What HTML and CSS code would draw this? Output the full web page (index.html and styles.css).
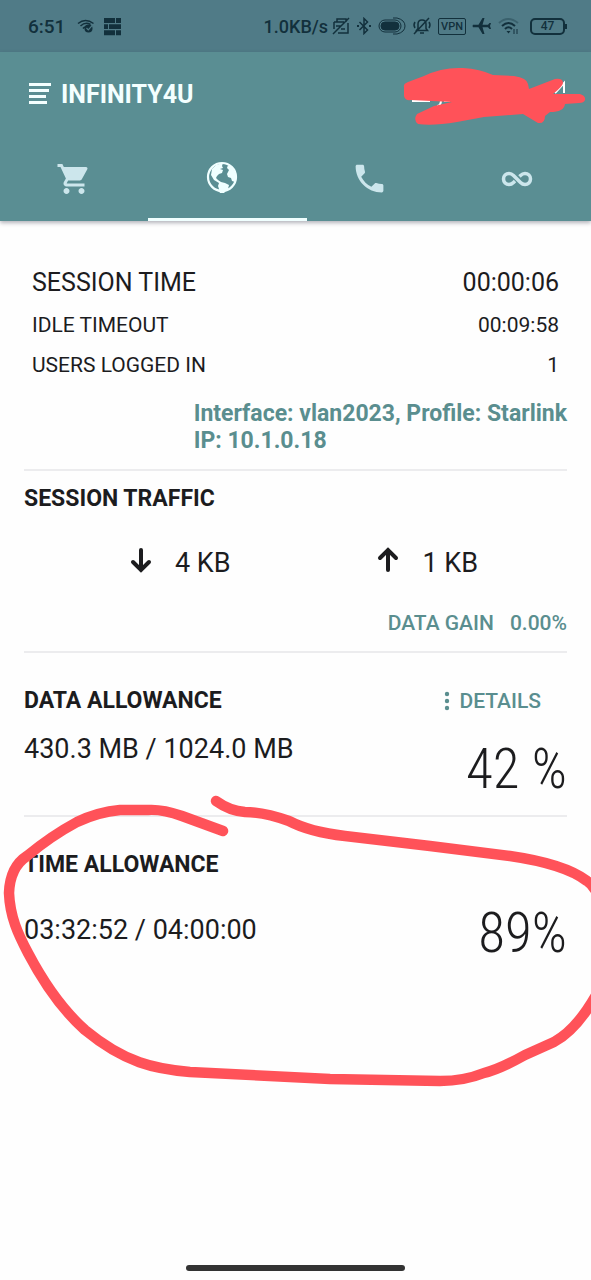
FILE: index.html
```html
<!DOCTYPE html>
<html lang="en">
<head>
<meta charset="utf-8">
<meta name="viewport" content="width=device-width, initial-scale=1">
<title>INFINITY4U</title>
<link rel="stylesheet" href="styles.css">
</head>
<body>
<div class="screen">
  <div class="status">
    <span class="clock">6:51</span>
    <svg class="wifi-check" width="18" height="14" viewBox="0 0 18 14" fill="none" stroke="currentColor" stroke-width="1.500">
      <path d="M1 4.500Q8.500-1.500 16.500 4.500M3.500 7Q8.500 2.500 13.500 5.500M6 9.500Q7 8 9 7.800"/>
      <circle cx="11.500" cy="9.500" r="4" fill="currentColor" stroke="none"/>
      <path d="M9.500 9l1.800 1.800 4-4.500" stroke="#507b87" stroke-width="1.200"/>
    </svg>
    <svg width="19" height="19" viewBox="0 0 19 19" fill="currentColor">
      <path d="M1 1h11v5H1zM13 1h5v5h-5zM1 7.200h4v4.800H1zM6 7.200h12v4.800H6zM1 13.200h11v5H1zM13 13.200h5v5h-5z"/>
    </svg>
    <span class="rate">1.0KB/s</span>
    <svg width="18" height="18" viewBox="0 0 18 18" fill="none" stroke="currentColor" stroke-width="1.500">
      <path d="M5 5V2h9v3M2 5h10M2 5v7M6 16h10V6M1 17L17 1M4 9h5M9 12h4"/>
    </svg>
    <svg width="16" height="18" viewBox="0 0 16 18" fill="none" stroke="currentColor" stroke-width="1.500">
      <path d="M3.500 5l8 8L8 16.500v-15L11.500 5l-8 8"/>
      <path d="M1 9h2M13 9h2" stroke-width="2"/>
    </svg>
    <svg width="28" height="18" viewBox="0 0 28 18" fill="none" stroke="currentColor">
      <rect x="3" y="5" width="18" height="8" rx="4" fill="currentColor"/>
      <rect x="1" y="3" width="22" height="12" rx="6"/>
      <path d="M15 1h4q8 2 8 8t-8 8h-4"/>
    </svg>
    <svg width="20" height="18" viewBox="0 0 20 18" fill="none" stroke="currentColor" stroke-width="1.500">
      <path d="M4.500 13.500h11l-1.500-2V7q0-4-4-4T6 7v4.500zM8 16h4M2 17L17 1M3 5q-2 3 0 6M17 5q2 3 0 6"/>
    </svg>
    <span class="vpn">VPN</span>
    <svg width="20" height="18" viewBox="0 0 20 18" fill="currentColor">
      <path d="M1 7.800h5.500L10.500 1h2l-2 6.800H16L17.500 6H19l-1 3 1 3h-1.500L16 10.200h-5.500l2 6.800h-2l-4-6.800H1q-1-1.200 0-2.400z"/>
    </svg>
    <svg width="22" height="18" viewBox="0 0 22 18" fill="none" stroke="currentColor" stroke-width="2">
      <path d="M1 6q9-8 19 0" opacity=".35"/>
      <path d="M4 9q6.500-6 13 0M7 12q3.500-3.500 7 0"/>
      <path d="M8.500 14h4l-2 2.500z" fill="currentColor" stroke="none"/>
      <path d="M16 12v5M19 12v5" stroke-width="1"/>
    </svg>
    <span class="battery">47</span>
  </div>

  <header class="bar">
    <div class="title-row">
      <button class="menu" aria-label="Menu">
        <svg width="24" height="24" viewBox="0 0 24 24" fill="#f4ffff"><path d="M1 1h22v3H1zM1 7h20v3H1zM1 13h17v3H1zM1 19h18v3H1z"/></svg>
      </button>
      <h1 class="brand">INFINITY4U</h1>
      <div class="account">
        <svg width="190" height="64" viewBox="0 0 190 64">
          <path d="M22 41h18" stroke="#fff" stroke-width="2"/>
          <path d="M51 40q0 6-4 6M54 41h6M66 40h6M149 35l6-3M165 33l9-10v10" fill="none" stroke="#fff" stroke-width="2"/>
          <path d="M14 27Q13 24 18 22L34 16Q52 7 73 8Q90 9 103 15L124 16Q137 18 138 24L139 29L165 19Q173 18 173 23Q173 26 163 34L190 34Q196 36 195 40Q194 43 189 43L175 44Q174 52 160 52L155 56Q155 64 148 63L133 54L94 57L67 62Q43 66 28 64Q23 60 27 54L44 46L62 42L21 40Q15 41 14 36Z" fill="#ff5259"/>
        </svg>
      </div>
    </div>
    <nav class="tabs">
      <button class="tab" aria-label="Shop"><svg width="36" height="36" viewBox="0 0 24 24" fill="#cce6ec"><path d="M7 18c-1.100 0-1.990.9-1.990 2S5.900 22 7 22s2-.9 2-2-.9-2-2-2zM1 2v2h2l3.600 7.590-1.350 2.450c-.16.280-.25.610-.25.960 0 1.100.9 2 2 2h12v-2H7.420c-.14 0-.25-.11-.25-.25l.03-.12.900-1.630h7.450c.75 0 1.410-.41 1.750-1.030l3.580-6.490A1 1 0 0020 4H5.210l-.94-2H1zm16 16c-1.100 0-1.990.9-1.990 2s.89 2 1.990 2 2-.9 2-2-.9-2-2-2z"/></svg></button>
      <button class="tab active" aria-label="Internet"><svg width="32" height="32" viewBox="0 0 32 32"><circle cx="16" cy="16" r="14" fill="none" stroke="#f0ffff" stroke-width="2.200"/><path d="M6 8l4-4 7-2-1 3 1 2-3 1 3 1-1 3-3 1-2 2-1 2 2 2 3 2 4 1 4 2-1 4-3 2-1 3h-4l-1-5-1-3 1-3-5-3-3-5zM20 3l6 3 4 8-1 7-3-1-1-3-3-1-1-3 2-4-2-2 1-3z" fill="#f0ffff"/></svg></button>
      <button class="tab" aria-label="Calls"><svg width="37" height="37" viewBox="0 0 24 24" fill="#cce6ec"><path d="M6.620 10.790c1.440 2.830 3.760 5.140 6.590 6.590l2.200-2.200c.27-.27.670-.36 1.020-.24 1.120.37 2.330.57 3.570.57.550 0 1 .45 1 1V20c0 .550-.45 1-1 1-9.390 0-17-7.610-17-17 0-.55.450-1 1-1h3.500c.550 0 1 .45 1 1 0 1.250.2 2.450.57 3.570.110.350.03.740-.25 1.020z"/></svg></button>
      <button class="tab" aria-label="Unlimited"><svg width="32" height="20" viewBox="0 0 32 20" fill="none" stroke="#cce6ec" stroke-width="3.500"><path d="M18.500 7.500l1-1C21 5 22 4.500 24 4.500a5.500 5.500 0 010 11c-2 0-3-.5-4.500-2l-7-7C11 5 10 4.500 8 4.500a5.500 5.500 0 000 11c2 0 3-.5 4.500-2l1.500-1.500"/></svg></button>
    </nav>
  </header>

  <main class="content">
    <section class="session">
      <dl class="stats">
        <div class="stat lead"><dt>SESSION TIME</dt><dd>00:00:06</dd></div>
        <div class="stat"><dt>IDLE TIMEOUT</dt><dd>00:09:58</dd></div>
        <div class="stat"><dt>USERS LOGGED IN</dt><dd>1</dd></div>
      </dl>
      <p class="network">Interface: vlan2023, Profile: Starlink<br>IP: 10.1.0.18</p>
    </section>

    <section class="traffic">
      <h2>SESSION TRAFFIC</h2>
      <div class="flows">
        <div class="flow"><svg width="24" height="26" viewBox="0 0 24 26"><path d="M12 3v20M4 15l8 8 8-8"/></svg><span>4 KB</span></div>
        <div class="flow"><svg width="24" height="26" viewBox="0 0 24 26"><path d="M12 23V3M4 11l8-8 8 8"/></svg><span>1 KB</span></div>
      </div>
      <p class="gain"><span>DATA GAIN</span><span>0.00%</span></p>
    </section>

    <section class="allowance">
      <div class="heading">
        <h2>DATA ALLOWANCE</h2>
        <button class="details"><svg width="6" height="20" viewBox="0 0 6 20" fill="currentColor"><circle cx="3" cy="3" r="2.200"/><circle cx="3" cy="10" r="2.200"/><circle cx="3" cy="17" r="2.200"/></svg>DETAILS</button>
      </div>
      <div class="usage"><span>430.3 MB / 1024.0 MB</span><strong class="percent">42 %</strong></div>
    </section>

    <section class="allowance time">
      <div class="heading"><h2>TIME ALLOWANCE</h2></div>
      <div class="usage"><span>03:32:52 / 04:00:00</span><strong class="percent">89%</strong></div>
      <svg class="scribble" viewBox="0 0 591 300" preserveAspectRatio="none" fill="none" stroke="#ff5259" stroke-width="10.500" stroke-linecap="round" stroke-linejoin="round">
        <path d="M223 46L182 31Q162 24 148 25L120 25Q98 27 77 37Q51 51 27 71Q10 82 9 108C10 132 18 149 28 168C48 206 67 229 85 245C125 278 155 284 190 287Q250 290 330 294L440 296Q464 296 484 288Q500 284 525 270L554 257Q578 244 599 205"/>
        <path d="M216 16Q230 26 245 27Q264 27 289 36Q310 47 345 51L430 61L510 71Q565 79 587 96Q593 100 597 108"/>
      </svg>
    </section>
  </main>
  <div class="home"></div>
</div>
</body>
</html>
```
FILE: styles.css
```css
* { box-sizing: border-box; }

body {
  margin: 0;
  background: #fefefe;
  color: #1c1c1e;
  font-family: Roboto, "Noto Sans", sans-serif;
  font-size: 21px;
}

h1, h2, p, dl, dd { margin: 0; }

button {
  padding: 0;
  border: 0;
  background: none;
  font: inherit;
  color: inherit;
}

svg { display: block; flex: none; }

.screen {
  display: flex;
  flex-direction: column;
  min-height: 100vh;
  overflow: hidden;
}

.status {
  display: flex;
  align-items: center;
  gap: 6px;
  height: 52px;
  padding: 0 26px 0 28px;
  background: #507b87;
  color: #12303c;
  font-weight: 500;
}

.clock { font-size: 19px; }
.wifi-check { margin: 0 2px 0 6px; }
.rate { margin-left: auto; font-size: 18px; }
.rate + svg { margin-left: -2px; }

.vpn {
  padding: 0 2px;
  border: 1px solid;
  border-radius: 2px;
  font-size: 11px;
  line-height: 15px;
}

.battery {
  position: relative;
  width: 35px;
  margin-left: 4px;
  border: 2px solid;
  border-radius: 5px;
  font-size: 12px;
  line-height: 13px;
  text-align: center;
}

.battery::after {
  content: "";
  position: absolute;
  top: 4px;
  right: -4px;
  width: 2px;
  height: 5px;
  background: currentColor;
}

.bar {
  background: #5a8e93;
  box-shadow: 0 2px 4px rgba(40, 40, 60, 0.35);
}

.title-row {
  display: flex;
  align-items: center;
  height: 84px;
  padding: 0 11px 0 28px;
}

.menu { margin-right: 9px; }

.brand {
  color: #f4ffff;
  font-size: 25px;
  font-weight: 700;
}

.account {
  height: 68px;
  margin-left: auto;
}

.account svg { overflow: visible; }

.tabs {
  position: relative;
  display: grid;
  grid-template-columns: repeat(4, 1fr);
  height: 85px;
}

.tabs::after {
  content: "";
  position: absolute;
  bottom: 0;
  left: 25%;
  width: 27%;
  height: 3px;
  background: #f0ffff;
}

.tab {
  display: grid;
  place-items: center;
}

.active { padding-bottom: 4px; }

.content { padding: 0 24px; }

section + section { border-top: 2px solid #ececee; }

.session { padding: 45px 0 15px; }

.stats {
  display: flex;
  flex-direction: column;
  gap: 10px;
  padding: 0 8px;
}

.stat {
  display: flex;
  justify-content: space-between;
  line-height: 30px;
}

.lead {
  font-size: 25px;
  line-height: 34px;
}

.network {
  width: fit-content;
  margin: 20px 0 0 auto;
  color: #5a8e8f;
  font-size: 23px;
  font-weight: 700;
  line-height: 27px;
}

h2 {
  font-size: 23px;
  font-weight: 700;
  line-height: 28px;
}

.traffic { padding: 14px 0; }

.flows {
  display: grid;
  grid-template-columns: 1fr 1fr;
  margin-top: 34px;
  padding: 0 16px 0 32px;
  font-size: 27px;
  line-height: 32px;
}

.flow {
  display: flex;
  justify-content: center;
  gap: 22px;
}

.flow path {
  fill: none;
  stroke: #1c1c1e;
  stroke-width: 4;
  stroke-linecap: round;
}

.gain {
  display: flex;
  justify-content: flex-end;
  gap: 16px;
  margin-top: 30px;
  color: #5a8e8f;
  font-weight: 500;
  line-height: 28px;
}

.allowance {
  position: relative;
  padding: 34px 0 18px;
}

.heading {
  display: flex;
  justify-content: space-between;
  align-items: center;
  padding-right: 26px;
}

.details {
  display: flex;
  align-items: center;
  gap: 9px;
  color: #5a8e8f;
  font-weight: 500;
}

.usage {
  display: flex;
  justify-content: space-between;
  margin-top: 20px;
  font-size: 27px;
  line-height: 28px;
}

.percent {
  padding-top: 6px;
  font-family: "Roboto Condensed", Roboto, sans-serif;
  font-size: 55px;
  font-weight: 300;
  line-height: 56px;
}

.time .usage {
  align-items: center;
  margin-top: 20px;
}

.scribble {
  position: absolute;
  top: -32px;
  left: -24px;
  width: calc(100% + 48px);
  height: 300px;
  overflow: visible;
}

.home {
  width: 37%;
  height: 6px;
  margin: auto auto 9px;
  border-radius: 3px;
  background: #333;
}
```
